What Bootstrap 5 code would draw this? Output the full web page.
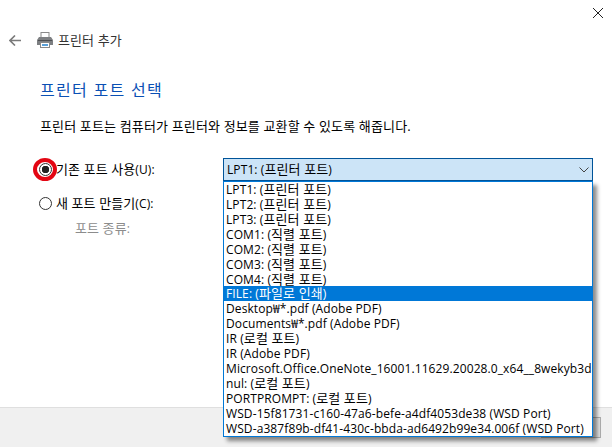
<!DOCTYPE html>
<html lang="ko">
<head>
    <meta charset="UTF-8">
    <meta name="viewport" content="width=device-width, initial-scale=1.0">
    <title>프린터 추가</title>
    <link rel="stylesheet" href="https://cdn.jsdelivr.net/npm/bootstrap@5.3.0/dist/css/bootstrap.min.css">
    <style>
        html, body {
            height: 100%;
        }
        body {
            font-family: "Open Sans", "Noto Sans CJK KR", sans-serif;
            font-size: 12px;
            line-height: 15px;
            letter-spacing: 0.1px;
            color: #000;
            background: #fff;
            overflow: hidden;
        }
        /* hangul runs are wider than the latin ones in the picture */
        .ko {
            font-size: 13px;
            line-height: 15px;
        }
        .wizard {
            height: 447px;
        }
        .close-row {
            height: 23px;
            padding: 8px 0 0 593px;
        }
        .head-row {
            height: 20px;
            margin-top: 7px;
            padding-left: 9px;
            color: #333;
        }
        .head-row .printer-icon {
            margin-left: 16px;
            margin-right: 5px;
        }
        .wizard-body {
            padding: 0 18px 0 40px;
        }
        .wizard-title {
            font-family: "Open Sans", "Noto Sans CJK KR", sans-serif;
            font-size: 16px;
            line-height: 20px;
            font-weight: 400;
            color: #0a50b4;
            letter-spacing: 1.3px;
            margin: 30px 0 0;
        }
        .wizard-text {
            margin: 19px 0 0;
            letter-spacing: 0.15px;
        }
        .port-row {
            margin-top: 24px;
            position: relative;
        }
        .port-left {
            width: 183px;
            flex: none;
            margin-top: -1px;
        }
        .radio-line {
            height: 23px;
            margin: 0 0 10px -1px;
        }
        .radio-line .form-check-input {
            width: 13px;
            height: 13px;
            margin: 0 4px 0 0;
            flex: none;
            border: 1px solid #333;
            background-color: #fff;
            background-image: none;
            box-shadow: none;
        }
        .radio-line .form-check-input:checked {
            border-color: #333;
            background-color: #fff;
            background-image: radial-gradient(circle, #222 0 3.5px, #fff 4px);
        }
        .radio-line .form-check-label {
            white-space: nowrap;
        }
        .kind-label {
            color: #8c8c8c;
            padding-left: 35px;
            margin-top: -4px;
        }
        .mark-ring {
            position: absolute;
            left: -7px;
            top: 0;
            width: 24px;
            height: 23px;
            border: 4px solid #e30613;
            border-radius: 50%;
        }
        .port-right {
            width: 370px;
            flex: none;
            position: relative;
        }
        .combo-box {
            height: 23px;
            background: #cce4f7;
            border: 1px solid #005499;
            padding: 0 3px 0 3px;
        }
        .combo-list {
            position: absolute;
            left: 0;
            right: 0;
            top: 23px;
            z-index: 5;
            border: 1px solid #0078d7;
            background: #fff;
            border-radius: 0;
            box-shadow: 4px 4px 4px rgba(0, 0, 0, 0.45);
            overflow: hidden;
        }
        .combo-list .list-group-item {
            border: 0;
            border-radius: 0;
            padding: 0 0 0 2px;
            height: 15px;
            line-height: 15px;
            font-size: 12px;
            white-space: nowrap;
            color: #000;
            background: transparent;
        }
        .combo-list .list-group-item.active {
            background: #0078d7;
            color: #fff;
        }
        .wizard-foot {
            height: 40px;
            background: #f0f0f0;
            border-top: 1px solid #dfdfdf;
            padding: 9px 11px 0 0;
        }
        .foot-btn {
            width: 60px;
            height: 21px;
            background: #e1e1e1;
            border: 1px solid #adadad;
        }
    </style>
</head>
<body>

<div class="wizard d-flex flex-column">
    <div class="close-row">
        <svg width="10" height="10" viewBox="0 0 10 10" class="d-block"><path d="M0 0l10 10M10 0L0 10" stroke="#222" fill="none"/></svg>
    </div>

    <div class="head-row d-flex align-items-center">
        <svg width="12" height="11" viewBox="0 0 12 11"><path d="M6 .5L1 5.5 6 10.5M1 5.5h11" stroke="#7a7a7a" stroke-width="1.6" fill="none"/></svg>
        <svg class="printer-icon" width="16" height="16" viewBox="0 0 16 16">
            <rect x="4" y="0.5" width="8" height="5" fill="#fff" stroke="#8a8a8a"/>
            <path d="M2 5h12l2 3v5H0V8z" fill="#7d7f82"/>
            <rect x="1" y="8" width="14" height="1" fill="#4d4f52"/>
            <rect x="3.5" y="10.5" width="9" height="5" fill="#fff" stroke="#8a8a8a"/>
            <rect x="5" y="12" width="6" height="2" fill="#5aa0d8"/>
        </svg>
        <span class="ko">프린터 추가</span>
    </div>

    <div class="wizard-body flex-grow-1">
        <h1 class="wizard-title">프린터 포트 선택</h1>
        <p class="wizard-text ko">프린터 포트는 컴퓨터가 프린터와 정보를 교환할 수 있도록 해줍니다.</p>

        <div class="port-row d-flex">
            <div class="port-left">
                <div class="form-check radio-line d-flex align-items-center p-0">
                    <input class="form-check-input" type="radio" name="port" id="portOld" checked>
                    <label class="form-check-label" for="portOld"><span class="ko">기존 포트 사용</span>(U):</label>
                </div>
                <div class="form-check radio-line d-flex align-items-center p-0">
                    <input class="form-check-input" type="radio" name="port" id="portNew">
                    <label class="form-check-label" for="portNew"><span class="ko">새 포트 만들기</span>(C):</label>
                </div>
                <div class="kind-label"><span class="ko">포트 종류</span>:</div>
            </div>
            <span class="mark-ring"></span>

            <div class="port-right">
                <div class="combo-box d-flex align-items-center justify-content-between">
                    <span>LPT1: (<span class="ko">프린터 포트</span>)</span>
                    <svg width="10" height="6" viewBox="0 0 10 6"><path d="M.5.5L5 5 9.5.5" stroke="#444" fill="none"/></svg>
                </div>
                <div class="list-group combo-list">
                    <div class="list-group-item">LPT1: (<span class="ko">프린터 포트</span>)</div>
                    <div class="list-group-item">LPT2: (<span class="ko">프린터 포트</span>)</div>
                    <div class="list-group-item">LPT3: (<span class="ko">프린터 포트</span>)</div>
                    <div class="list-group-item">COM1: (<span class="ko">직렬 포트</span>)</div>
                    <div class="list-group-item">COM2: (<span class="ko">직렬 포트</span>)</div>
                    <div class="list-group-item">COM3: (<span class="ko">직렬 포트</span>)</div>
                    <div class="list-group-item">COM4: (<span class="ko">직렬 포트</span>)</div>
                    <div class="list-group-item active">FILE: (<span class="ko">파일로 인쇄</span>)</div>
                    <div class="list-group-item">Desktop₩*.pdf (Adobe PDF)</div>
                    <div class="list-group-item">Documents₩*.pdf (Adobe PDF)</div>
                    <div class="list-group-item">IR (<span class="ko">로컬 포트</span>)</div>
                    <div class="list-group-item">IR (Adobe PDF)</div>
                    <div class="list-group-item">Microsoft.Office.OneNote_16001.11629.20028.0_x64__8wekyb3d8bbwe</div>
                    <div class="list-group-item">nul: (<span class="ko">로컬 포트</span>)</div>
                    <div class="list-group-item">PORTPROMPT: (<span class="ko">로컬 포트</span>)</div>
                    <div class="list-group-item">WSD-15f81731-c160-47a6-befe-a4df4053de38 (WSD Port)</div>
                    <div class="list-group-item">WSD-a387f89b-df41-430c-bbda-ad6492b99e34.006f (WSD Port)</div>
                </div>
            </div>
        </div>
    </div>

    <div class="wizard-foot d-flex justify-content-end">
        <div class="foot-btn"></div>
    </div>
</div>

<script src="https://cdn.jsdelivr.net/npm/bootstrap@5.3.0/dist/js/bootstrap.bundle.min.js"></script>

</body>
</html>
